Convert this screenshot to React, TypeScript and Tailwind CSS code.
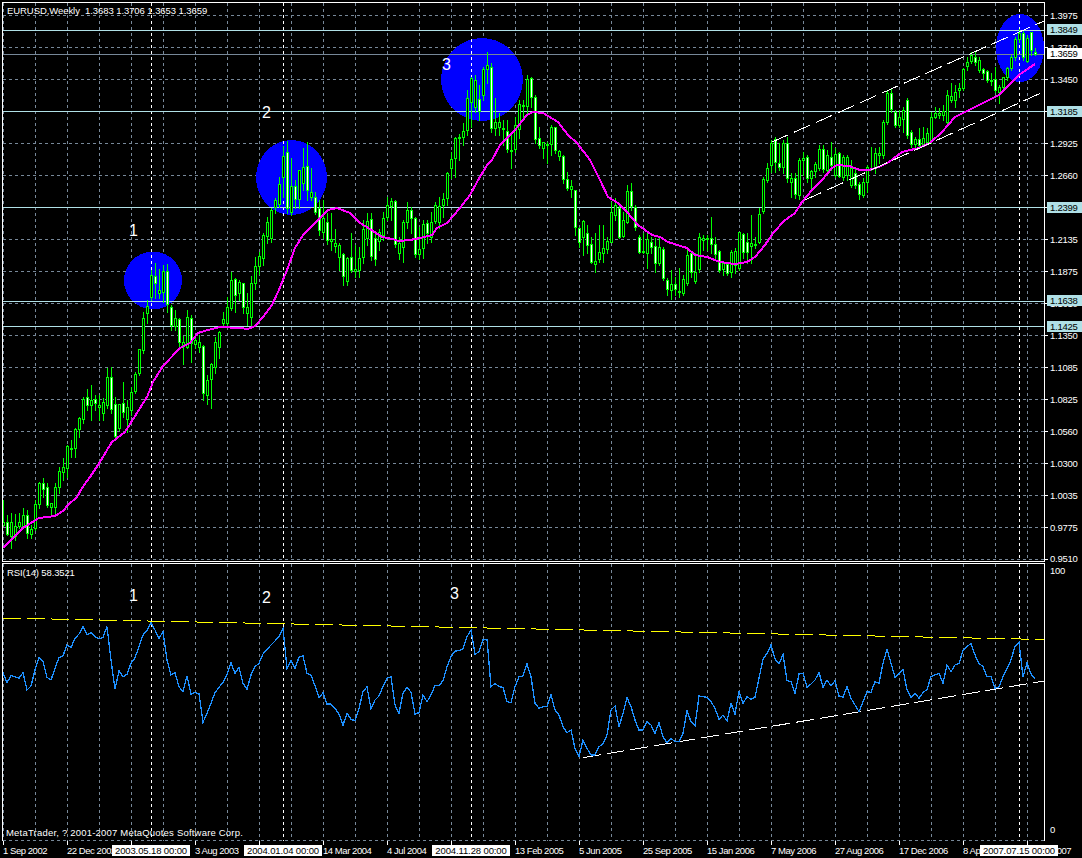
// EURUSD weekly chart, MetaTrader style. All chart numbers are page pixels.
const priceRows = [
  '1.3975', '1.3710', '1.3450', '1.3185', '1.2925', '1.2660', '1.2400', '1.2135', '1.1875',
  '1.1610', '1.1350', '1.1085', '1.0825', '1.0560', '1.0300', '1.0035', '0.9775',
];

// empty cells are the dates that sit fully under a crosshair tag
const timeLabels = [
  '1 Sep 2002', '22 Dec 2002', '', '3 Aug 2003', '', '14 Mar 2004', '4 Jul 2004',
  '', '13 Feb 2005', '5 Jun 2005', '25 Sep 2005', '15 Jan 2006', '7 May 2006', '27 Aug 2006',
  '17 Dec 2006', '8 Apr 2007', '29 Jul 2007',
];

const gridY = [15, 47, 79, 111, 143, 175, 207, 239, 271, 303, 335, 367, 399, 431, 463, 495, 527, 559];
const gridX = Array.from({ length: 33 }, (_, i) => 3 + 32 * i);
const crossX = [151, 283, 471, 1019];
const levels = [30, 111, 207, 301, 326];

// x, high, body top, body bottom, low, white body
const bars: number[][] = [
  [3,500,522,525,525,0],[7,515,522,534,535,1],[11,513,522,536,548,0],[15,514,526,536,540,0],[19,513,522,526,528,0],[23,508,515,527,528,0],[27,510,515,533,538,1],[31,525,529,534,538,0],
  [35,500,504,528,530,0],[39,482,483,504,508,0],[43,478,483,489,497,1],[47,483,487,505,507,1],[51,503,503,507,515,0],[55,483,487,507,515,0],[59,467,471,487,493,0],[63,458,467,472,480,0],
  [67,445,446,468,477,0],[71,440,448,449,457,0],[75,428,429,448,457,0],[79,417,418,429,437,0],[83,397,399,419,423,0],[87,389,397,405,410,1],[91,385,400,405,420,0],[95,395,399,403,410,1],
  [99,395,405,407,420,0],[103,398,402,413,420,0],[107,368,377,405,408,0],[111,367,377,409,413,1],[115,397,404,436,437,1],[119,404,404,428,430,0],[123,382,403,412,417,1],[127,400,407,419,432,0],
  [131,387,392,410,415,0],[135,372,374,391,393,0],[139,349,349,373,375,0],[143,312,318,350,353,0],[147,300,306,313,323,0],[151,270,275,297,300,0],[155,263,276,283,298,1],[159,269,290,293,298,0],
  [163,265,271,292,302,0],[167,264,271,304,312,1],[171,305,307,325,330,1],[175,310,318,326,330,0],[179,318,319,342,347,1],[183,336,342,346,364,0],[187,310,317,347,348,0],[191,315,318,343,362,1],
  [195,336,340,344,348,0],[199,335,342,347,352,0],[203,345,346,393,400,1],[207,375,380,395,404,0],[211,363,364,379,408,0],[215,337,342,367,373,0],[219,331,332,347,358,0],[223,312,319,323,327,0],
  [227,297,307,323,326,0],[231,272,280,308,310,0],[235,278,279,295,312,1],[239,280,282,293,300,0],[243,283,283,307,313,1],[247,293,307,313,325,0],[251,276,283,317,327,0],[255,257,266,283,289,0],
  [259,252,256,266,274,0],[263,233,235,258,265,0],[267,217,222,236,243,0],[271,208,210,238,242,0],[275,198,200,207,213,0],[279,177,184,204,207,0],[283,146,156,177,197,0],[287,141,152,208,213,1],
  [291,158,186,212,215,0],[295,180,186,199,208,1],[299,170,170,199,208,0],[303,148,167,183,190,0],[307,142,166,190,200,1],[311,168,192,197,200,0],[315,192,197,212,214,1],[319,200,208,230,235,1],
  [323,200,218,232,238,0],[327,213,222,240,244,1],[331,213,239,241,250,0],[335,229,243,246,252,0],[339,243,245,257,270,0],[343,253,254,276,285,1],[347,257,258,281,285,0],[351,233,257,270,272,1],
  [355,245,269,271,277,0],[359,247,258,270,277,0],[363,220,229,257,263,0],[367,213,221,238,245,0],[371,213,219,256,260,1],[375,232,238,259,265,1],[379,229,232,241,250,0],[383,212,218,235,240,0],
  [387,197,205,217,220,0],[391,198,201,206,220,0],[395,200,201,244,247,1],[399,237,243,253,259,0],[403,220,222,247,262,0],[407,202,210,222,228,0],[411,207,210,218,233,1],[415,217,218,254,257,1],
  [419,227,249,254,259,0],[423,220,224,248,258,0],[427,220,223,233,243,1],[431,212,222,237,242,0],[435,202,205,221,223,0],[439,197,206,222,228,0],[443,193,199,205,217,0],[447,172,173,198,205,0],
  [451,152,159,168,178,0],[455,137,138,158,177,0],[459,134,137,138,160,0],[463,123,131,137,145,0],[467,90,98,130,135,0],[471,77,78,102,127,0],[475,75,80,107,112,0],[479,85,99,111,120,1],
  [483,67,69,95,100,0],[487,52,65,69,83,0],[491,63,67,128,132,1],[495,98,122,128,135,0],[499,113,122,127,135,0],[503,120,128,129,145,0],[507,120,131,149,152,1],[511,135,150,151,168,0],
  [515,117,125,149,152,0],[519,100,104,129,138,0],[523,100,105,106,120,0],[527,75,79,106,115,0],[531,77,78,97,107,1],[535,95,97,139,143,1],[539,127,138,145,148,1],[543,142,142,148,158,0],
  [547,142,144,145,163,0],[551,125,127,144,155,0],[555,127,127,150,153,1],[559,150,151,156,160,0],[563,155,156,179,183,1],[567,172,179,188,190,1],[571,180,186,189,197,0],[575,190,190,227,235,1],
  [579,227,228,242,247,1],[583,220,221,237,255,0],[587,225,233,245,253,1],[591,237,244,262,263,1],[595,233,261,264,272,0],[599,225,252,259,262,0],[603,225,248,253,262,0],[607,237,241,249,253,0],
  [611,202,212,242,242,0],[615,198,205,215,220,0],[619,205,208,237,238,1],[623,212,220,236,237,0],[627,185,191,222,223,0],[631,183,191,206,210,1],[635,205,207,227,230,1],[639,235,237,252,253,1],
  [643,233,251,252,253,0],[647,233,239,253,268,0],[651,237,242,247,253,1],[655,238,246,263,272,1],[659,238,247,263,265,0],[663,247,249,278,280,1],[667,278,280,289,295,1],[671,270,284,290,299,0],
  [675,277,284,289,295,1],[679,268,291,292,297,0],[683,275,279,293,295,0],[687,247,255,283,285,0],[691,252,253,272,277,1],[695,253,272,281,283,0],[699,233,237,269,272,0],[703,235,238,240,250,0],
  [707,235,238,239,250,0],[711,217,238,244,253,1],[715,237,244,254,260,1],[719,250,251,270,272,1],[723,262,263,269,275,0],[727,262,264,273,275,1],[731,250,252,272,277,0],[735,248,251,265,273,0],
  [739,232,232,268,270,0],[743,233,234,252,258,1],[747,233,242,252,263,1],[751,215,243,246,263,0],[755,237,244,245,248,0],[759,208,214,242,243,0],[763,177,179,211,213,0],[767,163,168,180,182,0],
  [771,140,143,165,172,0],[775,137,139,162,172,1],[779,143,163,167,170,1],[783,140,143,167,173,0],[787,137,143,178,182,1],[791,173,178,182,197,0],[795,173,178,194,198,1],[799,158,160,195,199,0],
  [803,152,158,160,175,0],[807,155,157,178,182,1],[811,170,171,178,188,0],[815,162,164,171,177,0],[819,145,149,168,170,0],[823,145,149,169,172,1],[827,150,155,170,173,0],[831,142,157,165,170,1],
  [835,148,154,175,177,0],[839,152,153,176,177,1],[843,155,157,177,180,0],[847,155,157,175,180,0],[851,160,168,185,187,0],[855,168,173,185,188,1],[859,182,184,194,199,1],[863,178,182,195,197,0],
  [867,165,167,182,192,0],[871,147,168,169,170,0],[875,148,153,167,173,0],[879,147,153,155,163,0],[883,120,122,155,158,0],[887,90,93,122,124,0],[891,88,93,109,112,1],[895,110,112,125,127,1],
  [899,110,117,125,127,0],[903,107,110,119,132,0],[907,98,100,135,138,1],[911,130,132,144,147,1],[915,137,139,144,148,0],[919,128,139,145,148,1],[923,127,138,144,145,0],[927,128,133,142,143,0],
  [931,112,117,141,143,0],[935,107,113,117,118,0],[939,108,113,115,118,0],[943,105,111,115,120,0],[947,90,95,122,123,0],[951,83,96,100,102,0],[955,85,92,100,107,0],[959,83,88,90,97,0],
  [963,68,69,88,90,0],[967,57,62,66,70,0],[971,52,55,61,63,0],[975,52,57,62,65,1],[979,57,60,70,72,0],[983,68,69,73,78,1],[987,70,71,80,82,1],[991,73,80,81,85,0],
  [995,67,79,90,92,1],[999,85,87,92,103,0],[1003,77,77,87,90,0],[1007,67,68,77,80,0],[1011,55,57,68,70,0],[1015,37,39,57,60,0],[1019,29,33,39,42,0],[1023,30,33,57,60,1],
  [1027,35,38,61,62,0],[1031,32,32,50,55,1],[1035,48,52,54,55,1],
];

// moving average, read off by hand
const maPoints = '3,548 23,528 39,518 55,516 63,511 68,505 77,497 82,488 90,477 100,462 107,450 112,442 125,432 137,413 147,397 153,382 163,366 180,348 190,343 198,333 208,330 220,327 240,328 248,329 255,326 263,317 272,305 278,292 283,280 287,270 295,248 303,235 315,223 328,210 337,208 350,213 360,223 370,229 382,237 393,239 398,241 410,240 420,238 432,235 437,228 447,223 460,208 470,195 477,182 487,165 492,160 500,145 515,130 527,115 533,112 543,113 558,122 568,135 577,143 590,160 600,180 608,197 618,203 627,212 638,225 652,235 660,237 668,242 687,248 695,255 707,257 720,262 735,264 747,262 755,257 765,245 774,232 784,221 795,213 802,202 812,190 822,180 832,168 837,165 849,166 860,170 869,170 879,167 889,162 902,152 919,148 930,143 942,132 955,117 975,107 989,100 999,95 1009,85 1019,75 1029,68 1035,64';

// RSI samples, one per bar from x=3, measured at 3x from y=560
const rsiRaw = [
  338,368,347,350,355,338,390,378,330,292,305,352,360,325,293,287,255,262,235,222,200,225,218,230,237,232,200,300,388,332,350,343,310,293,260,225,212,188,210,235,215,300,345,338,380,395,347,403,397,402,487,460,430,398,382,367,345,308,340,322,370,388,345,320,310,282,268,255,243,230,205,325,302,325,292,288,340,345,377,413,398,432,432,445,462,495,460,478,482,445,
  395,380,447,420,408,380,355,350,435,460,400,382,397,462,458,405,425,405,377,377,362,320,290,273,272,266,230,210,283,275,240,238,380,370,380,382,425,428,380,350,348,312,350,430,445,440,440,405,450,465,500,518,510,565,590,540,565,585,585,560,552,525,450,438,500,460,412,440,480,510,510,485,495,520,488,530,548,535,545,545,520,452,485,497,408,410,412,425,445,478,
  465,483,430,462,393,430,410,418,412,355,297,280,255,297,312,283,362,365,400,342,340,382,372,360,337,382,360,378,362,408,412,380,415,435,455,425,395,397,365,370,310,268,310,352,340,328,390,412,400,415,398,388,350,345,340,370,315,335,315,310,272,260,250,285,310,320,350,350,385,380,350,325,300,258,248,350,308,342,355,
];
const rsiPoints = rsiRaw.map((v, i) => `${3 + 4 * i},${(560 + v / 3).toFixed(1)}`).join(' ');

const priceTags = [
  { top: 'top-[24px]', text: '1.3849', tone: 'bg-[#b0e0e6]' },
  { top: 'top-[48px]', text: '1.3659', tone: 'bg-white' },
  { top: 'top-[106px]', text: '1.3185', tone: 'bg-[#b0e0e6]' },
  { top: 'top-[202px]', text: '1.2399', tone: 'bg-[#b0e0e6]' },
  { top: 'top-[295px]', text: '1.1638', tone: 'bg-[#b0e0e6]' },
  { top: 'top-[321px]', text: '1.1425', tone: 'bg-[#b0e0e6]' },
];

const timeTags = [
  { left: 'left-[112px]', text: '2003.05.18 00:00' },
  { left: 'left-[244px]', text: '2004.01.04 00:00' },
  { left: 'left-[432px]', text: '2004.11.28 00:00' },
  { left: 'left-[980px]', text: '2007.07.15 00:00' },
];

function VerticalGrid({ y1, y2 }: { y1: number; y2: number }) {
  return (
    <>
      {gridX.map((x) => (
        <line key={x} x1={x + 0.5} x2={x + 0.5} y1={y1} y2={y2} stroke="#778899" strokeDasharray="3 3" />
      ))}
    </>
  );
}

function Crosshairs({ y1, y2 }: { y1: number; y2: number }) {
  return (
    <>
      {crossX.map((x) => (
        <line key={x} x1={x + 0.5} x2={x + 0.5} y1={y1} y2={y2} stroke="#ffffff" strokeDasharray="3 3" />
      ))}
    </>
  );
}

function PriceChart() {
  return (
    <svg width={1041} height={558} viewBox="3 3 1041 558" shapeRendering="crispEdges" className="block">
      <VerticalGrid y1={3} y2={561} />
      {gridY.map((y) => (
        <line key={y} x1={3} x2={1044} y1={y + 0.5} y2={y + 0.5} stroke="#778899" strokeDasharray="3 3" />
      ))}
      <ellipse cx={153} cy={280.5} rx={29} ry={29} fill="#0000ff" />
      <ellipse cx={291.5} cy={177.5} rx={35.5} ry={37.5} fill="#0000ff" />
      <ellipse cx={482} cy={79.5} rx={41} ry={41.5} fill="#0000ff" />
      <ellipse cx={1020} cy={48} rx={24} ry={34} fill="#0000ff" />
      <Crosshairs y1={3} y2={561} />
      {levels.map((y) => (
        <line key={y} x1={3} x2={1044} y1={y + 0.5} y2={y + 0.5} stroke="#b0e0e6" />
      ))}
      <line x1={3} x2={1044} y1={54.5} y2={54.5} stroke="#778899" />
      {bars.map(([x, high, top, bottom, low, white]) => (
        <g key={x}>
          <rect x={x} y={high} width={1} height={low - high + 1} fill="#00ff00" />
          <rect x={x - 1} y={top} width={3} height={bottom - top + 1} fill="#00ff00" />
          {bottom - top > 1 && (
            <rect x={x} y={top + 1} width={1} height={bottom - top - 1} fill={white ? '#ffffff' : '#000000'} />
          )}
        </g>
      ))}
      <polyline points={maPoints} fill="none" stroke="#ff00ff" strokeWidth={2} />
      <line x1={772} y1={142} x2={1044} y2={21} stroke="#ffffff" strokeDasharray="18 6" />
      <line x1={805} y1={200} x2={1041} y2={93} stroke="#ffffff" strokeDasharray="18 6" />
    </svg>
  );
}

function RsiChart() {
  return (
    <svg width={1041} height={277} viewBox="3 564 1041 277" shapeRendering="crispEdges" className="block">
      <VerticalGrid y1={564} y2={841} />
      <line x1={3} x2={1044} y1={840.5} y2={840.5} stroke="#778899" strokeDasharray="3 3" />
      <Crosshairs y1={564} y2={841} />
      <line x1={3} y1={618} x2={1044} y2={639.5} stroke="#ffff00" strokeDasharray="18 6" />
      <line x1={583} y1={757.7} x2={1044} y2={681} stroke="#ffffff" strokeDasharray="18 6" />
      <polyline points={rsiPoints} fill="none" stroke="#1e90ff" strokeWidth={1.3} />
    </svg>
  );
}

function Mark({ pos, children }: { pos: string; children: string }) {
  return <span className={`absolute text-[16px] leading-none tracking-normal ${pos}`}>{children}</span>;
}

export default function App() {
  return (
    <div className="relative h-[858px] w-[1082px] overflow-hidden bg-black font-['Liberation_Sans',sans-serif] text-[9.5px] leading-[11px] tracking-[-0.25px] text-white">
      <div className="flex">
        <div className="w-[1045px] shrink-0 pl-[2px] pt-[2px]">
          <div className="relative border border-white">
            <PriceChart />
            <span className="absolute left-[4px] top-[2px] whitespace-pre tracking-[-0.07px]">EURUSD,Weekly  1.3683 1.3706 1.3653 1.3659</span>
            <Mark pos="left-[126px] top-[220px]">1</Mark>
            <Mark pos="left-[259px] top-[102px]">2</Mark>
            <Mark pos="left-[439px] top-[54px]">3</Mark>
          </div>
          <div className="relative mt-px border-x border-t border-white">
            <RsiChart />
            <span className="absolute left-[4px] top-[3px] tracking-[-0.13px]">RSI(14) 58.3521</span>
            <span className="absolute left-[3px] top-[263px] whitespace-pre tracking-[0.2px]">MetaTrader, ? 2001-2007 MetaQuotes Software Corp.</span>
            <Mark pos="left-[126px] top-[24px]">1</Mark>
            <Mark pos="left-[259px] top-[26px]">2</Mark>
            <Mark pos="left-[447px] top-[22px]">3</Mark>
          </div>
          <div className="ml-px flex tracking-[-0.45px]">
            {timeLabels.map((label, i) => (
              <div key={i} className="w-[64px] shrink-0">
                <div className="h-[4px] w-px bg-white" />
                <div className="whitespace-nowrap">{label}</div>
              </div>
            ))}
          </div>
        </div>

        <div className="w-[37px] shrink-0">
          <div className="-mt-px">
            {priceRows.map((price) => (
              <div key={price} className="flex h-[32px] items-start">
                <div className="mt-[16px] h-px w-[3px] bg-white" />
                <span className="ml-[2px] mt-[11px]">{price}</span>
              </div>
            ))}
            <div className="flex h-[21px] items-start">
              <div className="mt-[16px] h-px w-[3px] bg-white" />
              <span className="ml-[2px] mt-[10px]">0.9510</span>
            </div>
          </div>
          <div className="flex h-[277px] flex-col justify-between pb-[6px] pl-[5px] pt-px">
            <span>100</span>
            <span>0</span>
          </div>
        </div>
      </div>

      {priceTags.map((tag) => (
        <span
          key={tag.text}
          className={`absolute left-[1047px] h-[11px] w-[35px] pl-[3px] text-black ${tag.top} ${tag.tone}`}
        >
          {tag.text}
        </span>
      ))}
      {timeTags.map((tag) => (
        <span
          key={tag.text}
          className={`absolute top-[845px] h-[11px] w-[78px] bg-white text-center tracking-[-0.12px] text-black ${tag.left}`}
        >
          {tag.text}
        </span>
      ))}
    </div>
  );
}
